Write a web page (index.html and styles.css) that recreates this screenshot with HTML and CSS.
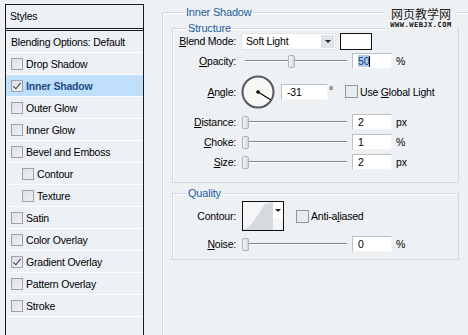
FILE: index.html
```html
<!DOCTYPE html>
<html lang="en">
<head>
    <meta charset="UTF-8">
    <title>Layer Style - Inner Shadow</title>
    <link rel="stylesheet" href="styles.css">
</head>
<body>
    <div class="layer-list">
        <div class="list-head">Styles</div>
        <div class="list-row">Blending Options: Default</div>
        <div class="list-row"><span class="check"></span>Drop Shadow</div>
        <div class="list-row active"><span class="check on"></span>Inner Shadow</div>
        <div class="list-row"><span class="check"></span>Outer Glow</div>
        <div class="list-row"><span class="check"></span>Inner Glow</div>
        <div class="list-row"><span class="check"></span>Bevel and Emboss</div>
        <div class="list-row sub"><span class="check"></span>Contour</div>
        <div class="list-row sub"><span class="check"></span>Texture</div>
        <div class="list-row"><span class="check"></span>Satin</div>
        <div class="list-row"><span class="check"></span>Color Overlay</div>
        <div class="list-row"><span class="check on"></span>Gradient Overlay</div>
        <div class="list-row"><span class="check"></span>Pattern Overlay</div>
        <div class="list-row"><span class="check"></span>Stroke</div>
    </div>

    <fieldset class="group outer">
        <legend>Inner Shadow</legend>

        <fieldset class="group inner">
            <legend>Structure</legend>

            <div class="field first">
                <span class="field-label"><u>B</u>lend Mode:</span>
                <div class="select">Soft Light<span class="select-btn"><span class="arrow"></span></span></div>
                <div class="swatch"></div>
            </div>

            <div class="field">
                <span class="field-label"><u>O</u>pacity:</span>
                <div class="slider"><span class="thumb" style="left: 47px"></span></div>
                <div class="num"><span class="selected">50</span><span class="caret"></span></div>
                <span class="unit">%</span>
            </div>

            <div class="field angle-row">
                <span class="field-label"><u>A</u>ngle:</span>
                <div class="dial">
                    <svg width="34" height="34" viewBox="0 0 34 34">
                        <circle cx="17" cy="17" r="15.5" fill="#f7f7f4" stroke="#55595e" stroke-width="2"/>
                        <line x1="17" y1="17" x2="30" y2="25" stroke="#000" stroke-width="1.2"/>
                        <circle cx="17" cy="17" r="1.8" fill="#000"/>
                    </svg>
                </div>
                <div class="num wide">-31</div>
                <span class="degree">°</span>
                <span class="check big"></span>
                <span class="check-label">Use <u>G</u>lobal Light</span>
            </div>

            <div class="field">
                <span class="field-label"><u>D</u>istance:</span>
                <div class="slider"><span class="thumb" style="left: 1px"></span></div>
                <div class="num">2</div>
                <span class="unit">px</span>
            </div>

            <div class="field">
                <span class="field-label"><u>C</u>hoke:</span>
                <div class="slider"><span class="thumb" style="left: 1px"></span></div>
                <div class="num">1</div>
                <span class="unit">%</span>
            </div>

            <div class="field">
                <span class="field-label"><u>S</u>ize:</span>
                <div class="slider"><span class="thumb" style="left: 1px"></span></div>
                <div class="num">2</div>
                <span class="unit">px</span>
            </div>
        </fieldset>

        <fieldset class="group inner quality">
            <legend>Quality</legend>

            <div class="field contour-row">
                <span class="field-label">Contour:</span>
                <div class="contour">
                    <svg width="30" height="28" viewBox="0 0 30 28">
                        <path d="M0 28 C10 24 16 10 22 2 L30 0 L30 28 Z" fill="#d6d9dd"/>
                    </svg>
                    <span class="contour-btn"><span class="arrow"></span></span>
                </div>
                <span class="check big aa"></span>
                <span class="check-label">Anti-a<u>l</u>iased</span>
            </div>

            <div class="field">
                <span class="field-label"><u>N</u>oise:</span>
                <div class="slider"><span class="thumb" style="left: 1px"></span></div>
                <div class="num">0</div>
                <span class="unit">%</span>
            </div>
        </fieldset>
    </fieldset>

    <div class="watermark">
        <div class="wm-cn">网页教学网</div>
        <div class="wm-en">WWW.WEBJX.COM</div>
    </div>
</body>
</html>
```

FILE: styles.css
```css
body {
    margin: 0;
    width: 468px;
    height: 335px;
    overflow: hidden;
    display: flex;
    align-items: flex-start;
    position: relative;
    background-color: #eef1f4;
    font-family: "Liberation Sans", Tahoma, sans-serif;
    font-size: 10.5px;
    letter-spacing: -0.2px;
    color: #000;
}

/* left style list */
.layer-list {
    margin: 4px 0 0 5px;
    width: 137px;
    height: 340px;
    border: 1px solid #1a1a1a;
    background-color: #edf1f5;
}
.list-head {
    height: 23px;
    line-height: 23px;
    padding-left: 4px;
    border-bottom: 3px double #1a1a1a;
}
.list-row {
    display: flex;
    align-items: center;
    height: 21px;
    padding-left: 5px;
    border-bottom: 1px solid #fbfcfd;
}
.list-row:first-of-type {
    padding-left: 4px;
}
.list-row.sub {
    padding-left: 16px;
}
.list-row.active {
    background-color: #c0dffb;
    color: #1d4c86;
    font-weight: bold;
}

.check {
    display: inline-block;
    position: relative;
    width: 10px;
    height: 10px;
    margin-right: 3px;
    border: 1px solid #9ca3ab;
    background: linear-gradient(135deg, #dde1e6, #eef0f3);
    flex-shrink: 0;
}
.check.on::after {
    content: "";
    position: absolute;
    left: 3px;
    top: 0;
    width: 3px;
    height: 7px;
    border: solid #3b3f44;
    border-width: 0 1.5px 1.5px 0;
    transform: rotate(40deg);
}
.check.big {
    width: 11px;
    height: 11px;
    margin-left: 12px;
    margin-right: 2px;
    background: #e9ecef;
    border-color: #8f969e;
}

/* right options */
.group {
    margin: 0;
    padding: 0;
    border: 1px solid #d2d8dd;
    box-shadow: inset 1px 1px 0 #fafbfc;
}
.group legend {
    padding: 0 2px;
    color: #1c5c9e;
    font-size: 11px;
}
.outer {
    flex: 1;
    margin: 6px -12px 0 18px;
    padding: 0 0 0 9px;
    height: 340px;
}
.outer > legend {
    margin-left: 12px;
}
.inner {
    width: 285px;
    margin-top: 4px;
    padding: 0 0 10px;
}
.inner > legend {
    margin-left: 13px;
}
.quality {
    margin-top: 4px;
    padding-top: 2px;
    padding-bottom: 5px;
}

.field {
    display: flex;
    align-items: center;
    height: 20px;
}
.field.first {
    margin-top: -3px;
}
.field-label {
    width: 63px;
    text-align: right;
    margin-right: 5px;
    white-space: nowrap;
}
.angle-row {
    height: 37px;
    margin-top: 2px;
    margin-bottom: 2px;
}
.contour-row {
    height: 30px;
    margin-bottom: 3px;
}

.select {
    position: relative;
    width: 89px;
    height: 15px;
    line-height: 15px;
    padding-left: 4px;
    background-color: #fff;
    border: 1px solid #e1e5e8;
}
.select-btn {
    position: absolute;
    right: 1px;
    top: 1px;
    width: 13px;
    height: 13px;
    background-color: #dfe3e7;
    display: flex;
    align-items: center;
    justify-content: center;
}
.arrow {
    width: 0;
    height: 0;
    border-left: 3px solid transparent;
    border-right: 3px solid transparent;
    border-top: 3px solid #222;
}
.swatch {
    width: 30px;
    height: 15px;
    margin-left: 4px;
    background-color: #fff;
    border: 1px solid #111;
}

.slider {
    position: relative;
    width: 106px;
    height: 14px;
}
.slider::before {
    content: "";
    position: absolute;
    left: 4px;
    right: 0;
    top: 6px;
    height: 1px;
    background-color: #80868c;
    box-shadow: 0 1px 0 #fff;
}
.thumb {
    position: absolute;
    top: 1px;
    width: 5px;
    height: 11px;
    border: 1px solid #aeb4ba;
    border-radius: 2px;
    background: linear-gradient(to right, #f4f5f6, #d5d9dd);
}

.num {
    display: flex;
    align-items: center;
    width: 33px;
    height: 14px;
    margin-left: 5px;
    padding-left: 5px;
    background-color: #fff;
    border: 1px solid;
    border-color: #b9c0c6 #f2f4f6 #f2f4f6 #b9c0c6;
}
.num.wide {
    width: 40px;
    margin-left: 6px;
}
.selected {
    background-color: #aecbf0;
    color: #183e78;
}
.caret {
    width: 1px;
    height: 11px;
    background-color: #000;
}
.unit {
    margin-left: 4px;
}
.degree {
    margin-left: 1px;
    margin-bottom: 4px;
}
.check-label {
    white-space: nowrap;
}

.dial {
    width: 34px;
    height: 34px;
}

.contour {
    position: relative;
    width: 40px;
    height: 28px;
    margin-left: 1px;
    background-color: #f5f6f7;
    border: 1px solid #111;
    display: flex;
}
.contour-btn {
    margin-left: auto;
    width: 10px;
    height: 16px;
    display: flex;
    align-items: center;
    justify-content: center;
    background-color: #fff;
}
.aa {
    margin-left: 13px;
}

/* site watermark on top of the dialog */
.watermark {
    position: absolute;
    left: 385px;
    top: 6px;
    width: 72px;
    text-align: center;
    background-color: #eef1f4;
}
.wm-cn {
    font-family: "Noto Sans CJK SC", sans-serif;
    font-size: 12px;
    line-height: 15px;
    color: #1a1a1a;
    letter-spacing: 0;
}
.wm-en {
    font-family: "DejaVu Sans Mono", monospace;
    font-size: 7px;
    font-weight: bold;
    line-height: 9px;
    letter-spacing: 0.5px;
    color: #111;
}
```
